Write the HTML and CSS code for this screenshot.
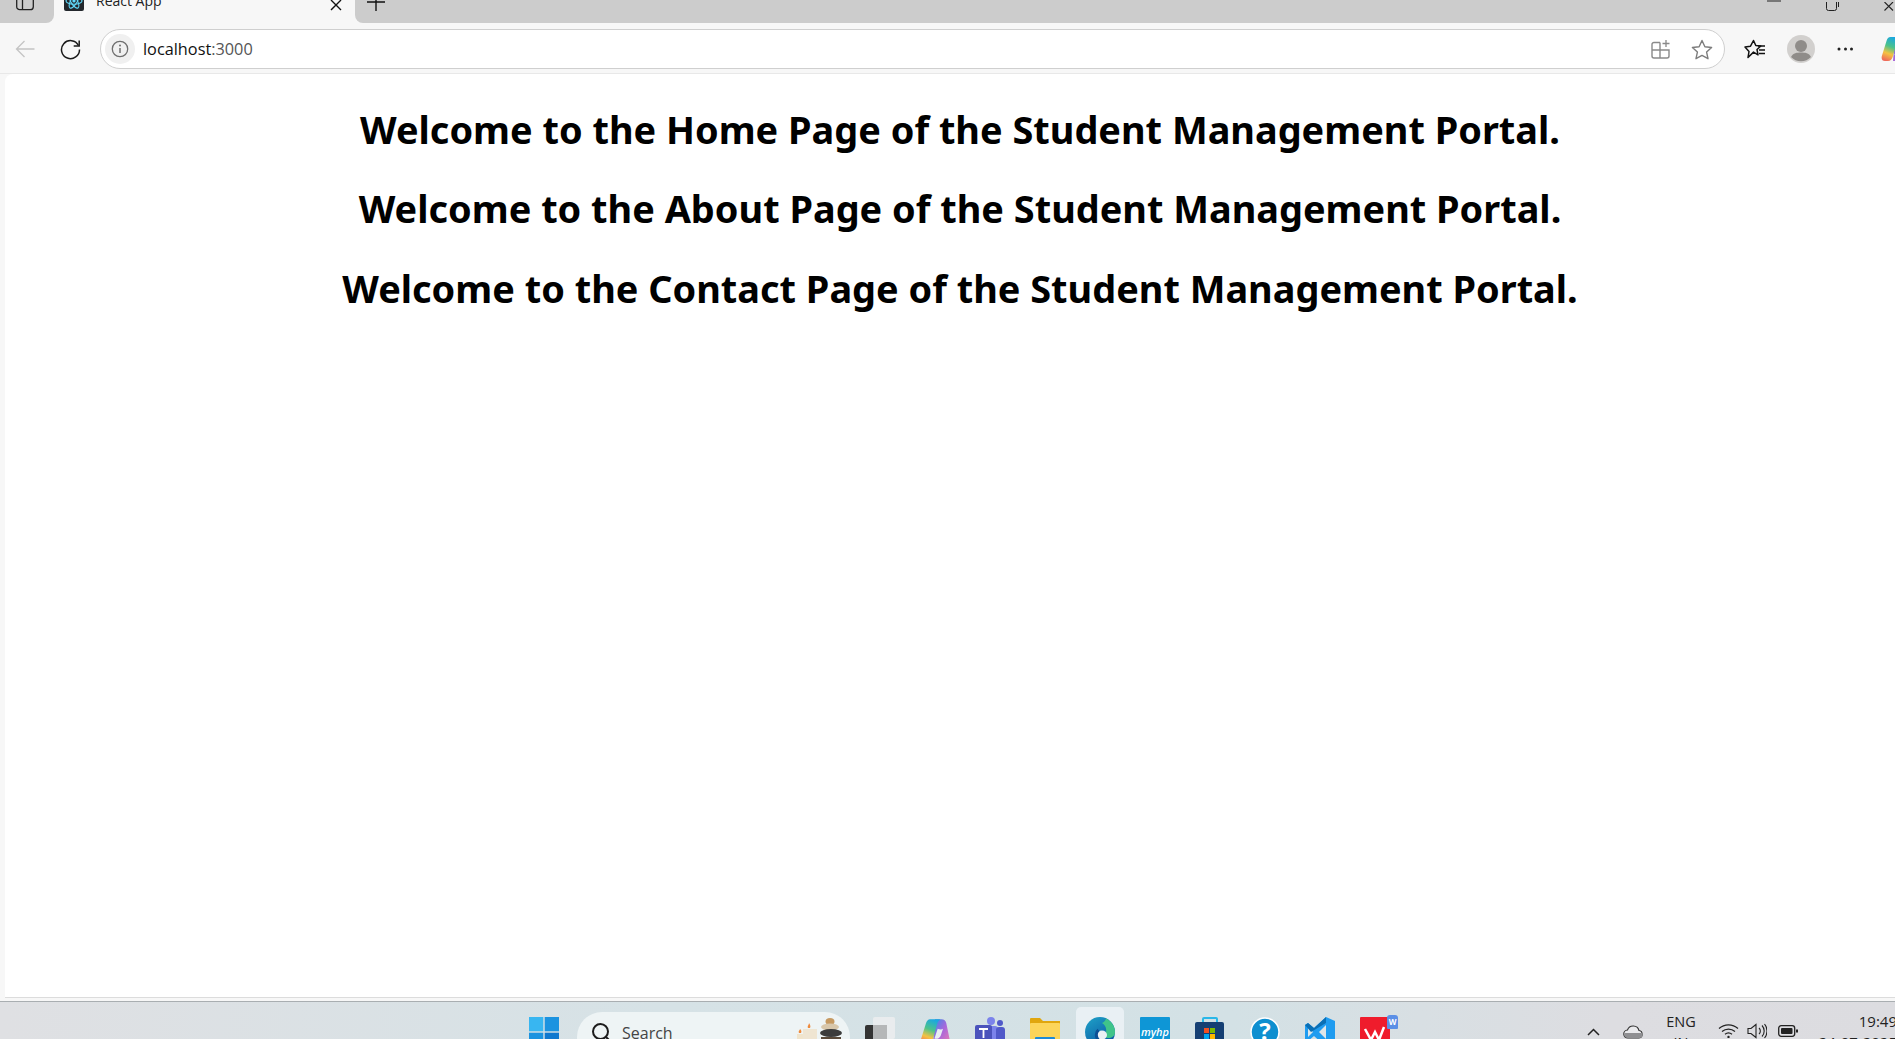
FILE: index.html
```html
<!DOCTYPE html>
<html lang="en">
<head>
<meta charset="utf-8">
<title>React App</title>
<link rel="stylesheet" href="styles.css">
</head>
<body>
<div class="window">
  <svg width="0" height="0" class="defs" aria-hidden="true">
    <defs>
      <linearGradient id="cop" x1="0.6" y1="0" x2="0.3" y2="1">
        <stop offset="0" stop-color="#1aa7e0"/><stop offset=".4" stop-color="#4cc38a"/><stop offset=".7" stop-color="#f5c242"/><stop offset="1" stop-color="#ef6a5b"/>
      </linearGradient>
      <linearGradient id="cop2" x1="0" y1="0" x2="1" y2="1">
        <stop offset="0" stop-color="#2b8fe8"/><stop offset=".5" stop-color="#a667dc"/><stop offset="1" stop-color="#ee7fb0"/>
      </linearGradient>
      <linearGradient id="edge" x1="0" y1="0" x2="0.6" y2="1">
        <stop offset="0" stop-color="#1fa3c8"/><stop offset="1" stop-color="#0b5aa5"/>
      </linearGradient>
    </defs>
  </svg>

  <header class="tabstrip">
    <div class="strip-left">
      <svg class="sidebar-icon" width="18" height="28" viewBox="0 0 18 28"><rect x=".7" y=".7" width="16.6" height="26" rx="3" fill="none" stroke="#222" stroke-width="1.3"/><path d="M6.5 1v26" stroke="#222" stroke-width="1.3"/></svg>
    </div>
    <div class="tab">
      <span class="favicon">
        <svg width="20" height="20" viewBox="0 0 20 20"><rect width="20" height="20" rx="2" fill="#23272c"/><g fill="none" stroke="#61dafb" stroke-width="1.1"><ellipse cx="10" cy="10" rx="8" ry="3.2"/><ellipse cx="10" cy="10" rx="8" ry="3.2" transform="rotate(60 10 10)"/><ellipse cx="10" cy="10" rx="8" ry="3.2" transform="rotate(120 10 10)"/></g><circle cx="10" cy="10" r="1.6" fill="#61dafb"/></svg>
      </span>
      <span class="tab-title">React App</span>
      <svg class="tab-close" width="12" height="12" viewBox="0 0 12 12"><path d="M1 1l10 10M11 1L1 11" stroke="#111" stroke-width="1.4"/></svg>
    </div>
    <div class="strip-right">
      <svg class="new-tab" width="18" height="18" viewBox="0 0 18 18"><path d="M9 0v18M0 9h18" stroke="#111" stroke-width="1.4"/></svg>
      <div class="window-controls">
        <svg width="14" height="2" viewBox="0 0 14 2"><path d="M0 1h14" stroke="#222" stroke-width="1"/></svg>
        <svg width="13" height="9" viewBox="0 0 13 9"><path d="M.5 0v6.500a2 2 0 0 0 2 2h6a2 2 0 0 0 2-2V0M12.500 0v5" fill="none" stroke="#222"/></svg>
        <svg width="13" height="9" viewBox="0 0 13 9"><path d="M.5 0l8.500 8.500M9 0L.5 8.500" stroke="#222" stroke-width="1.100"/></svg>
      </div>
    </div>
  </header>

  <nav class="toolbar">
    <svg class="tool-back" width="20" height="18" viewBox="0 0 20 18"><path d="M9.500 1L1.500 9l8 8M1.500 9H19.500" fill="none" stroke="#c4c4c4" stroke-width="1.300"/></svg>
    <svg class="tool-reload" width="21" height="21" viewBox="0 0 21 21"><path d="M18.500 6.500A9 9 0 1 0 19.500 10.500" fill="none" stroke="#1a1a1a" stroke-width="1.500"/><path d="M19.200 1.500v5.500h-5.500" fill="none" stroke="#1a1a1a" stroke-width="1.500"/></svg>
    <div class="address">
      <span class="site-info">
        <svg width="18" height="18" viewBox="0 0 18 18"><circle cx="9" cy="9" r="7.700" fill="none" stroke="#6f6f6f" stroke-width="1.300"/><path d="M9 8v5" stroke="#6f6f6f" stroke-width="1.500"/><circle cx="9" cy="5.500" r="1" fill="#6f6f6f"/></svg>
      </span>
      <span class="url">localhost<span class="url-port">:3000</span></span>
      <span class="address-actions">
        <svg width="20" height="20" viewBox="0 0 20 20"><path d="M9 3.500H3a2 2 0 0 0-2 2V17a2 2 0 0 0 2 2h13a2 2 0 0 0 2-2V11H1M9 3.500V19" fill="none" stroke="#8a8a8a" stroke-width="1.400"/><path d="M15 1v7M11.500 4.500h7" stroke="#8a8a8a" stroke-width="1.300"/></svg>
        <svg width="22" height="21" viewBox="0 0 22 21"><path d="M11 1.500l2.900 6.200 6.700.8-5 4.600 1.400 6.600L11 16.400l-6 3.300 1.400-6.600-5-4.600 6.700-.8z" fill="none" stroke="#7d7d7d" stroke-width="1.400" stroke-linejoin="round"/></svg>
      </span>
    </div>
    <div class="toolbar-right">
      <svg class="tool-fav" width="22" height="20" viewBox="0 0 22 20"><path d="M9.500 1.500l2.300 5 5 .5-3.800 3.500 1 5.300-4.500-2.700L4 18.500l1-6L1 8l5.500-.8z" fill="none" stroke="#111" stroke-width="1.500" stroke-linejoin="round"/><path d="M14 7h7M15 11h6M15 14.500h6" stroke="#111" stroke-width="1.300"/></svg>
      <span class="avatar">
        <svg width="28" height="28" viewBox="0 0 28 28"><circle cx="14" cy="14" r="14" fill="#d2d0ce"/><circle cx="14" cy="11" r="6" fill="#8f8c89"/><path d="M4 22c2-4 6-4.500 10-4.500s8 .5 10 4.500a14 14 0 0 1-20 0z" fill="#8f8c89"/></svg>
      </span>
      <svg class="tool-more" width="16" height="4" viewBox="0 0 16 4"><circle cx="2" cy="2" r="1.500" fill="#222"/><circle cx="8.500" cy="2" r="1.500" fill="#222"/><circle cx="14.500" cy="2" r="1.500" fill="#222"/></svg>
      <svg class="tool-copilot" width="28" height="28" viewBox="0 0 28 28"><path d="M14 2h6c2.500 0 4 1.500 4.500 3.500L27.500 20c.7 3-1 6-4 6H12z" fill="url(#cop2)"/><path d="M9.500 2H19c-1.500 1-2.500 2.500-3 4.500L12 21c-.8 3-2.500 5-5 5H4c-3 0-4-2.500-3-5.500L5.500 6C6.200 3.500 7.500 2 9.500 2z" fill="url(#cop)"/><path d="M16.500 11l-3 9c2 1 5 0 6-3l2-6c-1 1-3 1-5 0z" fill="#f4f7f8"/></svg>
    </div>
  </nav>

  <main class="page">
    <h1 class="heading">Welcome to the Home Page of the Student Management Portal.</h1>
    <h1 class="heading">Welcome to the About Page of the Student Management Portal.</h1>
    <h1 class="heading">Welcome to the Contact Page of the Student Management Portal.</h1>
  </main>
  <div class="page-foot"></div>

  <footer class="taskbar">
    <svg class="start" width="30" height="30" viewBox="0 0 30 30"><rect width="14.300" height="14.300" fill="#38b6f1"/><rect x="15.700" width="14.300" height="14.300" fill="#1b93e0"/><rect y="15.700" width="14.300" height="14.300" fill="#1b93e0"/><rect x="15.700" y="15.700" width="14.300" height="14.300" fill="#0f78cf"/></svg>
    <div class="search">
      <svg class="search-glass" width="22" height="22" viewBox="0 0 22 22"><circle cx="9.500" cy="9.500" r="7.500" fill="none" stroke="#1c1c1c" stroke-width="2"/><path d="M15 15l6 6" stroke="#1c1c1c" stroke-width="2"/></svg>
      <span class="search-label">Search</span>
      <svg class="search-art" width="50" height="24" viewBox="0 0 50 24"><rect x="3" y="16" width="9" height="8" fill="#f0e4cc"/><path d="M5 15c-1-2 1-3 1-4 1 1 2 2 1 4z" fill="#ef8a3c"/><rect x="9" y="11" width="14" height="13" fill="#efe5d2"/><path d="M14 10c-1-2 1-3 1-5 1 2 2 3 1 5z" fill="#ef8a3c"/><ellipse cx="36" cy="3.500" rx="4.500" ry="3.500" fill="#c69a62"/><ellipse cx="36" cy="9" rx="9" ry="3.500" fill="#d8c7ab"/><ellipse cx="37" cy="15" rx="11" ry="4" fill="#3c3c3c"/><rect x="27" y="19" width="20" height="5" fill="#5a4a3a"/></svg>
    </div>
    <div class="apps">
      <span class="app"><svg width="30" height="30" viewBox="0 0 30 30"><rect x="8" y="0" width="22" height="22" rx="2" fill="#e9ecee"/><rect y="8" width="22" height="22" rx="2" fill="#333"/><rect x="8" y="8" width="14" height="14" fill="#b5b7b8"/></svg></span>
      <span class="app"><svg width="30" height="30" viewBox="0 0 28 28"><path d="M14 2h6c2.500 0 4 1.500 4.500 3.500L27.500 20c.7 3-1 6-4 6H12z" fill="url(#cop2)"/><path d="M9.500 2H19c-1.500 1-2.500 2.500-3 4.500L12 21c-.8 3-2.500 5-5 5H4c-3 0-4-2.500-3-5.500L5.500 6C6.200 3.500 7.500 2 9.500 2z" fill="url(#cop)"/><path d="M16.500 11l-3 9c2 1 5 0 6-3l2-6c-1 1-3 1-5 0z" fill="#e8eef2"/></svg></span>
      <span class="app"><svg width="30" height="30" viewBox="0 0 30 30"><circle cx="16" cy="4" r="4" fill="#7b83eb"/><circle cx="25" cy="6" r="3" fill="#5059c9"/><rect x="12" y="9" width="11" height="18" rx="3" fill="#7b83eb"/><rect x="21" y="10" width="9" height="15" rx="3" fill="#5059c9"/><rect y="8" width="17" height="16" rx="2" fill="#4b53bc"/><path d="M4 12h9M8.500 12v9" stroke="#fff" stroke-width="1.800"/></svg></span>
      <span class="app"><svg width="30" height="30" viewBox="0 0 30 30"><path d="M0 2a1 1 0 0 1 1-1h9l3 3h17v26H0z" fill="#e0a60e"/><rect y="6" width="30" height="24" rx="1" fill="#fcd55a"/><rect x="5" y="20" width="20" height="10" rx="1" fill="#1d8ad6"/></svg></span>
      <span class="app app-active"><svg width="30" height="30" viewBox="0 0 30 30"><circle cx="15" cy="15" r="15" fill="url(#edge)"/><path d="M21 1.500C27 4.500 30 10 30 15c0 4-3 6-7 6-3 0-4-1-3-3 2-3 2-9-3-12 2-.8 3.500-2.500 4-4.500z" fill="#3fc48a"/><ellipse cx="17" cy="18" rx="5" ry="4.500" fill="#e9f0f4"/><path d="M13.500 13c-3 2.500-3 7 .5 11" fill="none" stroke="#0b4f95" stroke-width="3"/></svg></span>
      <span class="app"><svg width="30" height="30" viewBox="0 0 30 30"><rect width="30" height="30" rx="1" fill="#0e96d6"/><text x="15" y="19" class="myhp">myhp</text></svg></span>
      <span class="app"><svg width="30" height="30" viewBox="0 0 30 30"><path d="M8 6V2a1 1 0 0 1 1-1h12a1 1 0 0 1 1 1v4" fill="none" stroke="#2ab7e8" stroke-width="2"/><rect y="5" width="29" height="25" rx="2" fill="#153f73"/><rect x="9" y="11" width="5" height="5" fill="#f25022"/><rect x="15" y="11" width="5" height="5" fill="#7fba00"/><rect x="9" y="17" width="5" height="5" fill="#00a4ef"/><rect x="15" y="17" width="5" height="5" fill="#ffb900"/></svg></span>
      <span class="app"><svg width="30" height="30" viewBox="0 0 30 30"><circle cx="15" cy="15" r="14" fill="#0e8fd0" stroke="#fff" stroke-width="1.500"/><text x="15" y="23" class="help">?</text></svg></span>
      <span class="app"><svg width="30" height="30" viewBox="0 0 30 30"><path d="M21 0l9 4v22l-9 4-12-11-6 5-3-2v-14l3-2 6 5z" fill="#1f9cf0"/><path d="M21 8l-7 7 7 7z" fill="#dfe6e9"/><path d="M3 10l5 5-5 5z" fill="#dfe6e9"/><path d="M21 0L9 11l-6-5-3 2 6 7 15-9z" fill="#0a6fb5"/></svg></span>
      <span class="app app-wps"><svg width="30" height="30" viewBox="0 0 30 30"><rect width="30" height="30" rx="1" fill="#ef1c2c"/><path d="M5 12l6 11 4-8 4 8 5-13" fill="none" stroke="#fff" stroke-width="2.500"/></svg><span class="wps-badge">W</span></span>
    </div>
    <div class="tray">
      <svg class="tray-chevron" width="13" height="8" viewBox="0 0 13 8"><path d="M1 7l5.500-5.500L12 7" fill="none" stroke="#222" stroke-width="1.500"/></svg>
      <svg class="tray-cloud" width="21" height="14" viewBox="0 0 21 14"><path d="M5 13a4 4 0 0 1-.5-8A6 6 0 0 1 16 5.500a3.800 3.800 0 0 1 0 7.500z" fill="#e9e9ec" stroke="#333" stroke-width="1.100"/><path d="M1.500 8h18v2a3 3 0 0 1-3 3H5a3.500 3.500 0 0 1-3.500-5z" fill="#8f8f92"/></svg>
      <span class="lang">ENG<br>IN</span>
      <svg class="tray-wifi" width="21" height="15" viewBox="0 0 21 15"><path d="M1 5.500a14 14 0 0 1 19 0M4 8.500a10 10 0 0 1 13 0M7 11.300a5.500 5.500 0 0 1 7 0" fill="none" stroke="#222" stroke-width="1.200"/><circle cx="10.500" cy="14" r="1.200" fill="#222"/></svg>
      <svg class="tray-sound" width="20" height="16" viewBox="0 0 20 16"><path d="M1 5.500h3L9 1.500v13l-5-4H1z" fill="none" stroke="#222" stroke-width="1.100"/><path d="M12 5a4 4 0 0 1 0 6M15 2.500a8 8 0 0 1 0 11M17.500 1a11 11 0 0 1 0 14" fill="none" stroke="#222" stroke-width="1.100"/></svg>
      <svg class="tray-battery" width="20" height="12" viewBox="0 0 20 12"><rect x=".7" y=".7" width="16" height="10.600" rx="2.500" fill="none" stroke="#222" stroke-width="1.300"/><rect x="3" y="3" width="11.500" height="6" rx="1" fill="#222"/><rect x="18" y="4.500" width="2" height="3" fill="#222"/></svg>
      <div class="clock"><span>19:49</span><span>24-07-2025</span></div>
    </div>
  </footer>
</div>
</body>
</html>
```

FILE: styles.css
```css
* { box-sizing: border-box; }
html, body { margin: 0; padding: 0; }
body { background: #f7f7f7; font-family: "Noto Sans", "Open Sans", sans-serif; }
svg { flex: none; }
.defs { display: block; height: 0; width: 0; }
.window { width: 1895px; height: 1039px; overflow: hidden; display: flex; flex-direction: column; background: #f7f7f7; }

.tabstrip { flex: 0 0 23px; display: flex; background: #f7f7f7; overflow: hidden; }
.strip-left { flex: 0 0 54px; background: #cccccc; border-bottom-right-radius: 8px; padding-left: 16px; display: flex; align-items: flex-end; padding-bottom: 12px; height: 23px; }
.tab { flex: 0 0 301px; display: flex; align-items: flex-end; padding: 0 12px 12px 10px; height: 23px; }
.favicon { display: flex; height: 20px; }
.tab-title { margin-left: 12px; font-family: "Open Sans", sans-serif; font-size: 14px; line-height: 20px; color: #222; flex: 1; }
.tab-close { margin-right: 1px; }
.strip-right { flex: 1; background: #cccccc; border-bottom-left-radius: 8px; display: flex; align-items: flex-end; justify-content: space-between; padding-left: 12px; padding-bottom: 12px; height: 23px; }
.window-controls { display: flex; align-items: flex-end; gap: 45px; margin-right: -2px; }
.window-controls svg:first-child { margin-bottom: 9px; }

.toolbar { flex: 0 0 51px; display: flex; align-items: center; padding: 2px 0 0 15px; background: #f7f7f7; border-bottom: 1px solid #e8e8e8; }
.tool-back { margin-right: 25px; }
.tool-reload { margin-right: 19px; }
.address { flex: 0 0 1625px; height: 40px; background: #fff; border: 1.500px solid #cfcfcf; border-radius: 20px; display: flex; align-items: center; padding: 0 11px 0 4px; }
.site-info { width: 30px; height: 30px; border-radius: 50%; background: #f0f0f0; display: flex; align-items: center; justify-content: center; }
.url { margin-left: 8px; font-family: "Open Sans", sans-serif; font-size: 16.300px; color: #111; }
.url-port { color: #555; }
.address-actions { margin-left: auto; display: flex; align-items: center; gap: 20px; }
.toolbar-right { display: flex; align-items: center; padding-left: 19px; }
.tool-fav { margin-right: 21px; }
.avatar { display: flex; margin-right: 22px; }
.tool-more { margin-right: 28px; }

.page { flex: 1; margin-left: 5px; background: #fff; border-top-left-radius: 8px; padding: 2px 0 0 20px; border-bottom: 1px solid #dcdcdc; overflow: hidden; }
.heading { margin: 26.500px 0; font-family: "Noto Sans", sans-serif; font-weight: 700; font-size: 37.900px; line-height: 53px; color: #000; text-align: center; white-space: nowrap; }
.page-foot { flex: 0 0 3px; background: #f7f7f7; }

.taskbar { flex: 0 0 38px; display: flex; align-items: flex-start; overflow: hidden; border-top: 1px solid #a9aeb1; background: linear-gradient(90deg, #dfe0e3 0%, #d6e2e6 35%, #d3e1e5 65%, #dddde1 85%, #dcdce0 100%); padding-left: 529px; }
.start { margin-top: 15px; }
.search { flex: 0 0 273px; height: 50px; margin: 10px 0 0 18px; background: #eef4f5; border-radius: 25px; display: flex; align-items: flex-start; padding: 10px 0 0 14px; }
.search-label { margin-left: 9px; font-family: "Open Sans", sans-serif; font-size: 16px; line-height: 22px; color: #444; }
.search-art { margin: -4px 6px 0 auto; }
.apps { display: flex; margin-left: 2px; flex: none; }
.app { flex: 0 0 55px; height: 60px; display: flex; justify-content: center; padding-top: 15px; position: relative; }
.app-active::before { content: ""; position: absolute; top: 5px; left: 3.500px; width: 48px; height: 60px; background: #e9f0f4; border-radius: 5px; }
.app svg { position: relative; }
.myhp { font-family: "Open Sans", sans-serif; font-style: italic; font-size: 11px; font-weight: 600; fill: #fff; text-anchor: middle; }
.help { font-family: "Open Sans", sans-serif; font-size: 24px; font-weight: 700; fill: #fff; text-anchor: middle; }
.wps-badge { position: absolute; top: 13px; right: 4px; width: 11px; height: 14px; background: #5b8fe6; border-radius: 3px 3px 1px 1px; color: #fff; font: 700 8px/14px "Open Sans", sans-serif; text-align: center; }
.tray { margin-left: auto; display: flex; align-items: flex-start; flex: none; }
.tray-chevron { margin: 26px 23px 0 0; }
.tray-cloud { margin: 23px 14.500px 0 0; }
.lang { width: 46px; font-family: "Open Sans", sans-serif; font-size: 14.500px; line-height: 21px; text-align: center; color: #222; margin-top: 9px; }
.tray-wifi { margin: 21px 8.500px 0 13.500px; }
.tray-sound { margin: 21px 11px 0 0; }
.tray-battery { margin: 23px 20px 0 0; }
.clock { width: 79px; margin-right: -2px; display: flex; flex-direction: column; align-items: flex-end; font-family: "Open Sans", sans-serif; font-size: 15px; line-height: 21px; color: #222; margin-top: 9px; white-space: nowrap; }
```
